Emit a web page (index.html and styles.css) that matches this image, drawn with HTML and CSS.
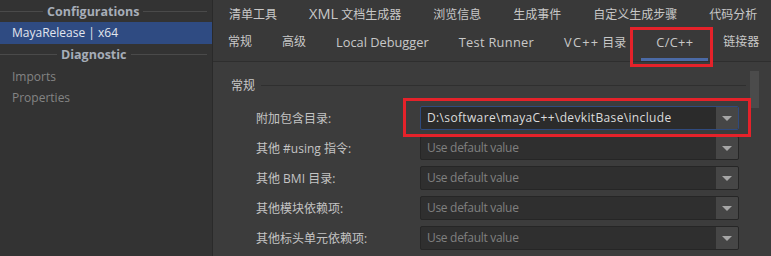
FILE: index.html
```html
<!doctype html>
<html lang="zh">
<head>
  <meta charset="UTF-8">
  <title>属性页</title>
  <link rel="stylesheet" href="styles.css">
</head>
<body>
  <div class="app">
    <aside class="sidebar">
      <div class="side-header"><span class="line short"></span><span class="side-title">Configurations</span><span class="line"></span></div>
      <div class="side-item selected">MayaRelease | x64</div>
      <div class="side-header"><span class="line short2"></span><span class="side-title">Diagnostic</span><span class="line"></span></div>
      <div class="side-item">Imports</div>
      <div class="side-item">Properties</div>
    </aside>

    <main class="main">
      <div class="tabs">
        <div class="tab-row top">
          <span class="tab">清单工具</span>
          <span class="tab"><span class="lt">XML</span> 文档生成器</span>
          <span class="tab">浏览信息</span>
          <span class="tab">生成事件</span>
          <span class="tab">自定义生成步骤</span>
          <span class="tab">代码分析</span>
        </div>
        <div class="tab-row bottom">
          <span class="tab">常规</span>
          <span class="tab">高级</span>
          <span class="tab"><span class="lt">Local Debugger</span></span>
          <span class="tab"><span class="lt spaced">Test Runner</span></span>
          <span class="tab"><span class="lt wide">VC++</span> 目录</span>
          <span class="tab active"><span class="lt spaced">C/C++</span></span>
          <span class="tab">链接器</span>
        </div>
      </div>

      <div class="content">
        <div class="group-header"><span>常规</span><span class="group-line"></span></div>

        <div class="row">
          <div class="label">附加包含目录:</div>
          <div class="combo focused">
            <span class="combo-text path">D:\software\mayaC++\devkitBase\include</span>
            <span class="combo-arrow"></span>
          </div>
        </div>
        <div class="row">
          <div class="label">其他 #using 指令:</div>
          <div class="combo"><span class="combo-text placeholder">Use default value</span><span class="combo-arrow"></span></div>
        </div>
        <div class="row">
          <div class="label">其他 BMI 目录:</div>
          <div class="combo"><span class="combo-text placeholder">Use default value</span><span class="combo-arrow"></span></div>
        </div>
        <div class="row">
          <div class="label">其他模块依赖项:</div>
          <div class="combo"><span class="combo-text placeholder">Use default value</span><span class="combo-arrow"></span></div>
        </div>
        <div class="row">
          <div class="label">其他标头单元依赖项:</div>
          <div class="combo"><span class="combo-text placeholder">Use default value</span><span class="combo-arrow"></span></div>
        </div>
        <div class="row last">
          <div class="label"></div>
          <div class="combo"><span class="combo-text placeholder"></span><span class="combo-arrow"></span></div>
        </div>

        <div class="scrollbar"></div>
      </div>
    </main>

    <!-- cadres rouges d'annotation -->
    <div class="mark mark-tab"></div>
    <div class="mark mark-combo"></div>
  </div>
</body>
</html>
```

FILE: styles.css
```css
body {
  margin: 0;
  padding: 0;
  width: 771px;
  height: 256px;
  overflow: hidden;
  background: #3c3c3c;
  font-family: 'Open Sans', 'Noto Sans CJK SC', sans-serif;
  font-size: 12px;
}

.app {
  position: relative;
  display: flex;
  width: 771px;
  height: 256px;
  overflow: hidden;
}

/* Barre latérale */
.sidebar {
  width: 213px;
  flex-shrink: 0;
  background: #333333;
  border-right: 1px solid #2a2a2a;
  box-sizing: border-box;
}

.side-header {
  display: flex;
  align-items: center;
  height: 22px;
  padding-right: 5px;
}

.side-title {
  font-weight: bold;
  font-size: 12.5px;
  color: #a6adb8;
  padding: 0 4px;
}

.line {
  flex: 1;
  height: 1px;
  background: #4a4a4a;
}

.line.short {
  flex: 0 0 43px;
}

.line.short2 {
  flex: 0 0 57px;
}

.side-item {
  height: 21.5px;
  line-height: 21px;
  padding-left: 12px;
  font-size: 12px;
  color: #848484;
}

.side-item.selected {
  background: #2f4b82;
  color: #e2e6ee;
}

/* Zone principale */
.main {
  flex: 1;
  display: flex;
  flex-direction: column;
  background: #3c3c3c;
}

.tabs {
  background: #393939;
  border-bottom: 1px solid #2e2e2e;
}

.tab-row {
  display: flex;
  white-space: nowrap;
}

.tab-row.top {
  height: 27px;
  align-items: center;
}

.tab {
  padding: 0 15px;
  color: #c8c8c8;
}

.tab-row.top .tab {
  padding: 0 16px;
}

.lt {
  font-size: 12.8px;
}

.lt.spaced {
  letter-spacing: 0.3px;
}

.lt.wide {
  letter-spacing: 1.2px;
}

.tab-row.top .lt {
  font-size: 14.5px;
}

.tab-row.bottom .tab {
  padding-top: 6px;
  line-height: 18px;
  height: 25px;
  border-bottom: 3px solid transparent;
}

.tab-row.bottom .tab.active {
  border-bottom-color: #4b6aa6;
}

.content {
  position: relative;
  flex: 1;
  padding: 14px 28px 0 18px;
}

.group-header {
  display: flex;
  align-items: center;
  height: 18px;
  margin-bottom: 12px;
  color: #c8c8c8;
}

.group-line {
  flex: 1;
  height: 1px;
  background: #2f2f2f;
  margin-left: 6px;
}

.row {
  display: flex;
  align-items: center;
  height: 24px;
  margin-bottom: 6px;
  padding-left: 25px;
}

.label {
  width: 164px;
  flex-shrink: 0;
  color: #c4c4c4;
}

.combo {
  display: flex;
  width: 319px;
  height: 24px;
  box-sizing: border-box;
  background: #2f2f2f;
  border: 1px solid #262626;
  border-radius: 2px;
  overflow: hidden;
}

.combo.focused {
  background: #2b2b2b;
  border-color: #2f4a7e;
}

.combo-text {
  flex: 1;
  padding-left: 6px;
  line-height: 22px;
  color: #dcdcdc;
  white-space: nowrap;
}

.combo-text.path {
  letter-spacing: 0.35px;
}

.combo-text.placeholder {
  color: #808080;
  letter-spacing: -0.3px;
}

.combo-arrow {
  width: 22px;
  background: #464646;
  display: flex;
  align-items: center;
  justify-content: center;
}

.combo-arrow::after {
  content: '';
  border-left: 5px solid transparent;
  border-right: 5px solid transparent;
  border-top: 5px solid #a6a6a6;
}

.scrollbar {
  position: absolute;
  top: 9px;
  right: 15px;
  width: 9px;
  height: 37px;
  background: #4b4b4b;
}

/* Annotations rouges */
.mark {
  position: absolute;
  border: 3px solid #e5222a;
  box-sizing: border-box;
}

.mark-tab {
  left: 630px;
  top: 27px;
  width: 83px;
  height: 40px;
}

.mark-combo {
  left: 403px;
  top: 98px;
  width: 348px;
  height: 39px;
}
```
